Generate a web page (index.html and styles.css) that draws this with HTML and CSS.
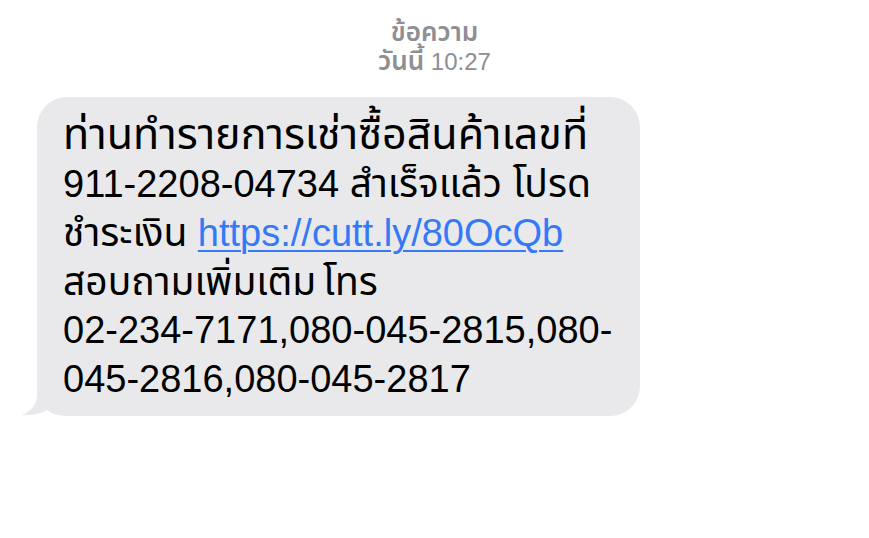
FILE: index.html
```html
<!DOCTYPE html>
<html lang="th">
<head>
  <meta charset="UTF-8">
  <meta name="viewport" content="width=device-width, initial-scale=1.0">
  <title>ข้อความ</title>
  <link rel="stylesheet" href="styles.css">
</head>
<body>
  <div class="header">
    <div class="title th">ข้อความ</div>
    <div class="time"><span class="day th">วันนี้</span> 10:27</div>
  </div>

  <div class="thread">
    <div class="bubble">
      <div class="line"><span class="th wide">ท่านทำรายการเช่าซื้อสินค้าเลขที่</span></div>
      <div class="line">911-2208-04734 <span class="th">สำเร็จแล้ว โปรด</span></div>
      <div class="line"><span class="th">ชำระเงิน</span> <a href="#" class="link">https://cutt.ly/80OcQb</a></div>
      <div class="line"><span class="th tight">สอบถามเพิ่มเติม โทร</span></div>
      <div class="line">02-234-7171,080-045-2815,080-</div>
      <div class="line">045-2816,080-045-2817</div>
      <svg class="tail" width="40" height="32" viewBox="0 0 40 32">
        <path d="M16 0 L16 10 C16 20 10 26 1 30 C10 31 19 29 26 25 C30 28 34 30 40 30 L40 0 Z" fill="#e9e9eb"/>
      </svg>
    </div>
  </div>
</body>
</html>
```

FILE: styles.css
```css
body {
  margin: 0;
  background: #ffffff;
  font-family: "Liberation Sans", "Noto Sans Thai", "Noto Sans", sans-serif;
  color: #000000;
}
.header {
  padding-top: 18px;
  text-align: center;
  color: #8e8e93;
  font-size: 24px;
  line-height: 29px;
}
.header .th {
  font-size: 26px;
}
.title, .day {
  font-weight: 600;
}
.thread {
  padding: 21px 0 0 37px;
}
.bubble {
  position: relative;
  width: 577px;
  padding: 13px 0 12px 26px;
  background: #e9e9eb;
  border-radius: 30px;
  font-size: 38px;
  white-space: nowrap;
}
.line {
  height: 49px;
  line-height: 49px;
}
.bubble .th {
  font-size: 39px;
}
.bubble .th.wide {
  font-size: 43px;
}
.bubble .th.tight {
  word-spacing: -4px;
}
.link {
  color: #3579f6;
  text-decoration: underline;
  text-decoration-thickness: 2px;
  text-underline-offset: 4px;
}
.tail {
  position: absolute;
  left: -16px;
  bottom: -1px;
}
```
